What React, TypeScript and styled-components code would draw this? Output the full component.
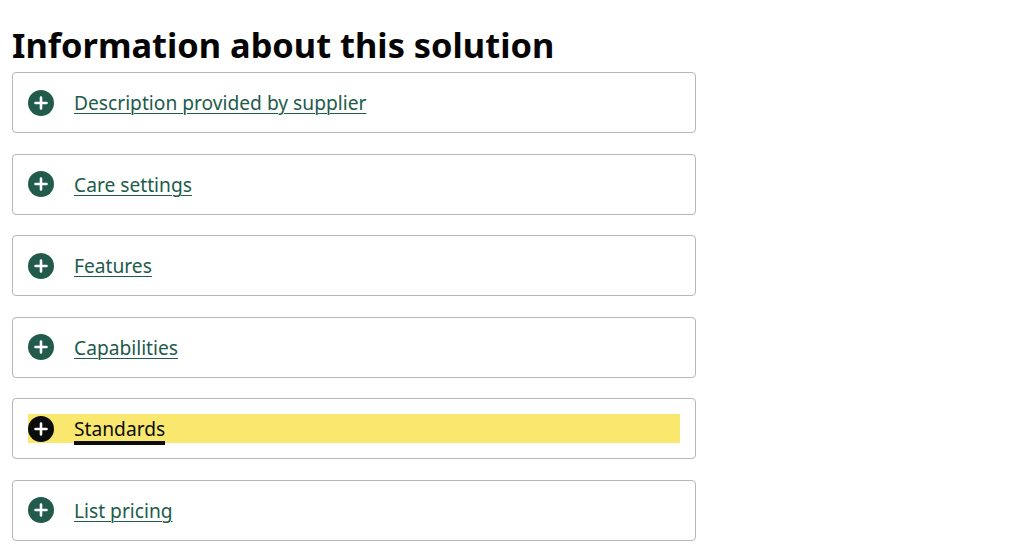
import React from "react";
import styled, { createGlobalStyle } from "styled-components";

const Global = createGlobalStyle`
  html, body { margin: 0; padding: 0; background: #fff; }
  body { font-family: "Noto Sans", "Open Sans", sans-serif; color: #0b0c0c; }
`;

const Page = styled.div`
  padding: 23px 12px 0 12px;
  width: 684px;
`;

const Heading = styled.h2`
  margin: 0 0 5px 0;
  font-size: 34.4px;
  line-height: 44px;
  font-weight: 700;
  color: #050505;
`;

const List = styled.div`
  display: flex;
  flex-direction: column;
  gap: 20.6px;
`;

const Card = styled.div`
  border: 1px solid #b3b8bb;
  border-radius: 4px;
  background: #fff;
  padding: 15px 15px;
`;

const Summary = styled.div<{ $focus?: boolean }>`
  display: flex;
  align-items: center;
  gap: 20px;
  height: 29px;
  background: ${(p) => (p.$focus ? "#f9e86d" : "transparent")};
`;

const Icon = styled.span<{ $focus?: boolean }>`
  width: 26px;
  height: 26px;
  border-radius: 50%;
  background: ${(p) => (p.$focus ? "#0b0c0c" : "#225b4b")};
  display: flex;
  align-items: center;
  justify-content: center;
  flex: none;
`;

const Label = styled.span<{ $focus?: boolean }>`
  font-size: 19.2px;
  line-height: 25px;
  color: ${(p) => (p.$focus ? "#0b0c0c" : "#225b4b")};
  text-decoration: ${(p) => (p.$focus ? "none" : "underline")};
  text-underline-offset: 3px;
  text-decoration-thickness: 1px;
  box-shadow: ${(p) => (p.$focus ? "0 4px 0 #0b0c0c" : "none")};
  cursor: pointer;
`;

const items = [
  "Description provided by supplier",
  "Care settings",
  "Features",
  "Capabilities",
  "Standards",
  "List pricing",
];

const Plus = () => (
  <svg width="16" height="16" viewBox="0 0 16 16">
    <path d="M8 2.5v11M2.5 8h11" stroke="#fff" strokeWidth="2.6" strokeLinecap="round" />
  </svg>
);

export default function App() {
  return (
    <>
      <Global />
      <Page>
        <Heading>Information about this solution</Heading>
        <List>
          {items.map((t) => {
            const f = t === "Standards";
            return (
              <Card key={t}>
                <Summary $focus={f}>
                  <Icon $focus={f}>
                    <Plus />
                  </Icon>
                  <Label $focus={f}>{t}</Label>
                </Summary>
              </Card>
            );
          })}
        </List>
      </Page>
    </>
  );
}
